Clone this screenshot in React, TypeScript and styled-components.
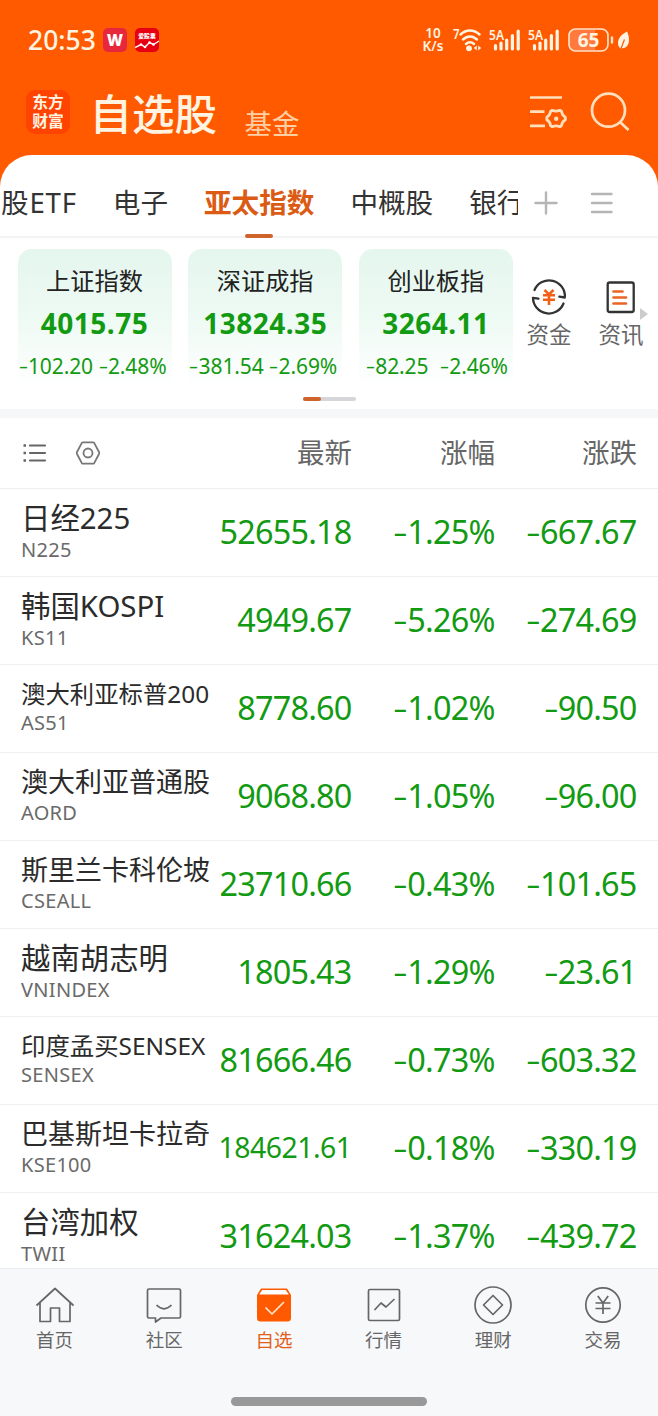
import React from "react";
import styled, { createGlobalStyle } from "styled-components";

const SANS = '"Noto Sans", "Noto Sans CJK SC", sans-serif';
const ORANGE = "#ff5a00";
const CREAM = "#fff4e2";
const GREEN = "#129a12";

const Global = createGlobalStyle`
  * { box-sizing: border-box; }
  html, body { margin: 0; padding: 0; }
  body { font-family: ${SANS}; background: #fff; }
  svg { display: block; flex: none; overflow: visible; }
`;

const Screen = styled.div`
  width: 658px;
  height: 1416px;
  display: flex;
  flex-direction: column;
  overflow: hidden;
  background: ${ORANGE};
`;

/* ---------- status bar ---------- */
const StatusBar = styled.div`
  height: 80px;
  flex: none;
  display: flex;
  align-items: center;
  padding: 0 28px;
  color: ${CREAM};
`;
const Clock = styled.div`
  width: 75px;
  font-size: 26.5px;
  line-height: 38px;
  font-weight: 500;
  white-space: nowrap;
`;
const AppBadge = styled.div`
  width: 24px;
  height: 24px;
  margin-right: 8px;
  border-radius: 5px;
  overflow: hidden;
`;
const StatusIcons = styled.div`
  margin-left: auto;
  display: flex;
  align-items: center;
`;
const Speed = styled.div`
  width: 22px;
  margin-top: -1px;
  font-size: 13.5px;
  line-height: 13px;
  font-weight: 600;
  text-align: center;
  white-space: nowrap;
`;

/* ---------- title bar ---------- */
const TitleBar = styled.div`
  height: 75px;
  flex: none;
  display: flex;
  align-items: flex-start;
  padding: 0 28px 0 26px;
`;
const Logo = styled.div`
  width: 44px;
  height: 44px;
  margin-top: 10px;
  padding: 3px 0 0;
  border-radius: 9px;
  background: #ff4300;
  color: ${CREAM};
  font: 700 15.8px/18.5px "Noto Sans CJK SC", sans-serif;
  text-align: center;
`;
const MainTitle = styled.div`
  margin: 6px 0 0 19.5px;
  width: 155px;
  color: ${CREAM};
  font-size: 42.5px;
  line-height: 56px;
  font-weight: 500;
`;
const SubTitle = styled.div`
  margin-top: 24px;
  color: #ffcfa4;
  font-size: 27.5px;
  line-height: 40px;
`;
const TitleActions = styled.div`
  margin: 12px 0 0 auto;
  display: flex;
  gap: 22px;
`;

/* ---------- sheet ---------- */
const Sheet = styled.div`
  flex: 1;
  min-height: 0;
  display: flex;
  flex-direction: column;
  background: #fff;
  border-radius: 32px 32px 0 0;
  overflow: hidden;
`;
const TabBar = styled.div`
  height: 83px;
  flex: none;
  display: flex;
  border-bottom: 2px solid #f3f3f4;
`;
const TabStrip = styled.div`
  width: 518px;
  height: 83px;
  padding-left: 1px;
  display: flex;
  gap: 36px;
  overflow: hidden;
`;
const Tab = styled.div<{ $active?: boolean; $wide?: boolean }>`
  flex: none;
  display: flex;
  flex-direction: column;
  align-items: center;
  justify-content: space-between;
  padding-top: 27px;
  font-size: 27.6px;
  line-height: 40px;
  letter-spacing: ${(p) => (p.$wide ? "0.8px" : "0")};
  font-weight: ${(p) => (p.$active ? 700 : 400)};
  color: ${(p) => (p.$active ? "#db5b14" : "#333")};
  white-space: nowrap;
`;
const TabMark = styled.div`
  width: 28px;
  height: 4px;
  border-radius: 2px;
  background: #d0622c;
`;
const TabTools = styled.div`
  flex: 1;
  display: flex;
  gap: 32px;
  padding: 36px 0 0 16px;
`;

const Indices = styled.div`
  height: 171px;
  flex: none;
  display: flex;
  flex-direction: column;
`;
const IndexRow = styled.div`
  display: flex;
  padding: 11px 0 0 17.5px;
`;
const Card = styled.div`
  width: 154px;
  height: 138px;
  flex: none;
  margin-right: 16.7px;
  border-radius: 14px;
  background: linear-gradient(#e4f6ed, #eefaf4 50%, #fff);
  text-align: center;
  white-space: nowrap;
`;
const CardName = styled.div`
  padding-top: 14px;
  font-size: 24.2px;
  line-height: 36px;
  color: #222;
`;
const CardPrice = styled.div`
  margin-top: 4px;
  font-size: 28px;
  line-height: 40px;
  font-weight: 700;
  letter-spacing: 0.5px;
  color: ${GREEN};
`;
const CardChange = styled.div`
  display: flex;
  margin-top: 8px;
  padding-left: 0.5px;
  font-size: 21px;
  line-height: 30px;
  letter-spacing: -0.1px;
  color: ${GREEN};
`;
const Half = styled.div`
  width: 77px;
  display: flex;
  justify-content: center;
`;
const Minus = styled.span`
  display: inline-block;
  margin-right: 0.07em;
  transform: scale(1.4, 0.85) translateY(-0.01em);
`;
const Shortcut = styled.div<{ $gap: number }>`
  width: 46px;
  flex: none;
  margin-left: ${(p) => p.$gap}px;
  display: flex;
  flex-direction: column;
  align-items: center;
  padding-top: 30px;
  font-size: 22.5px;
  line-height: 34px;
  color: #666;
`;
const ShortcutLabel = styled.div`
  margin-top: 3px;
  white-space: nowrap;
`;
const More = styled.div`
  width: 8px;
  margin-left: -4px;
  padding-top: 59px;
`;
const Pager = styled.div`
  width: 53px;
  height: 4px;
  margin: 10px 0 0 303px;
  border-radius: 2px;
  background: #d5d5da;
`;
const PagerThumb = styled.div`
  width: 18px;
  height: 4px;
  border-radius: 2px;
  background: #d0622c;
`;
const Divider = styled.div`
  height: 9px;
  flex: none;
  background: #f6f7f9;
`;

/* ---------- quote table ---------- */
const Columns = styled.div`
  display: grid;
  grid-template-columns: 193px 138px 143px 142px;
  padding-left: 21px;
`;
const HeadRow = styled(Columns)`
  height: 71px;
  flex: none;
  align-items: center;
  border-bottom: 1px solid #eee;
`;
const HeadTools = styled.div`
  display: flex;
  align-items: center;
  gap: 29px;
  padding-left: 1px;
`;
const HeadCell = styled.div`
  text-align: right;
  font-size: 27.5px;
  line-height: 40px;
  padding-bottom: 1px;
  color: #666;
`;
const Rows = styled.div`
  flex: 1;
  min-height: 0;
  overflow: hidden;
`;
const QuoteRow = styled(Columns)`
  height: 88px;
  border-bottom: 1px solid #f0f0f0;
`;
const NameCell = styled.div`
  padding-top: 11px;
  white-space: nowrap;
`;
const Name = styled.div<{ $size: number }>`
  height: ${(p) => (p.$size > 28 ? 38 : p.$size > 26 ? 37 : 35)}px;
  font-size: ${(p) => p.$size}px;
  line-height: 36px;
  color: #2b2b2b;
`;
const Code = styled.div`
  font-size: 20px;
  line-height: 24px;
  letter-spacing: 0.3px;
  color: #6a6a6a;
`;
const Num = styled.div<{ $size?: number }>`
  display: flex;
  justify-content: flex-end;
  font-size: ${(p) => p.$size ?? 32.4}px;
  line-height: 84px;
  letter-spacing: ${(p) => (p.$size ? -0.5 : -0.8)}px;
  padding-right: 0.5px;
  color: ${GREEN};
  white-space: nowrap;
`;

/* ---------- bottom navigation ---------- */
const BottomBar = styled.div`
  height: 148px;
  flex: none;
  display: flex;
  flex-direction: column;
  align-items: center;
  background: #f7f8fa;
  border-top: 1px solid #ebebed;
`;
const NavRow = styled.div`
  width: 100%;
  height: 128px;
  display: grid;
  grid-template-columns: repeat(6, 1fr);
`;
const NavItem = styled.div<{ $active?: boolean }>`
  display: flex;
  flex-direction: column;
  align-items: center;
  padding: 17px 0.5px 0 0;
  font-size: 18.5px;
  line-height: 28px;
  color: ${(p) => (p.$active ? "#e2601a" : "#666")};
`;
const HomeIndicator = styled.div`
  width: 196px;
  height: 9px;
  border-radius: 5px;
  background: #999;
`;

/* ---------- icons ---------- */
const WBadge = () => (
  <svg width="24" height="24" viewBox="0 0 24 24">
    <rect width="24" height="24" fill="#e9273c" />
    <text x="12" y="17.500" textAnchor="middle" fontSize="15.500" fontWeight="800" fill="#fff" fontFamily="Inter">W</text>
  </svg>
);
const StockBadge = () => (
  <svg width="24" height="24" viewBox="0 0 24 24">
    <rect width="24" height="24" fill="#e60012" />
    <text x="12" y="10" textAnchor="middle" fontSize="5.8" fontWeight="900" fill="#fff" fontFamily="Noto Sans CJK SC">爱股票</text>
    <path d="M0 19.5l6-3 4 2.5 4.500-4.500 4 2L24 13" fill="none" stroke="#fff" strokeWidth="1.4" />
    <g fill="#fff"><circle cx="6" cy="16.500" r="1.300" /><circle cx="10" cy="19" r="1.300" /><circle cx="14.500" cy="14.500" r="1.300" /><circle cx="18.500" cy="16.500" r="1.300" /></g>
  </svg>
);
const StatusSvg = styled.svg<{ $gap: number }>`
  margin-left: ${(p) => p.$gap}px;
`;
const Wifi = () => (
  <StatusSvg $gap={8} width="30" height="26" viewBox="0 0 30 26">
    <text x="1" y="11.500" fontSize="14" fontWeight="600" fill={CREAM} textLength="6.500" lengthAdjust="spacingAndGlyphs">7</text>
    <g fill="none" stroke={CREAM} strokeWidth="2.500" strokeLinecap="round">
      <path d="M8.500 7.500c5.700-5.400 13.300-5.400 19 0" />
      <path d="M11 12.500c4.200-4 9.800-4 14 0" />
      <path d="M14 17c2.500-2.200 5.500-2.200 8 0" />
    </g>
    <circle cx="17" cy="21.300" r="2.900" fill={CREAM} />
    <path d="M24.800 18.500v5l-3-2.500zM26.200 18.500v5l3-2.500z" fill={CREAM} />
  </StatusSvg>
);
const Signal = () => (
  <StatusSvg $gap={7} width="32" height="26" viewBox="0 0 32 26">
    <text x="0" y="12.500" fontSize="14" fontWeight="600" fill={CREAM} textLength="15" lengthAdjust="spacingAndGlyphs">5A</text>
    <path d="M6.500 18.500v3.500M12 16v6M17.700 13v9M23.400 8.500V22M29.200 4v18" stroke={CREAM} strokeWidth="3.200" strokeLinecap="round" />
  </StatusSvg>
);
const Battery = () => (
  <StatusSvg $gap={8} width="62" height="26" viewBox="0 0 62 26">
    <rect x="1" y="2" width="39" height="22" rx="6.500" fill="#ff7a3c" stroke="#ffe0c4" strokeWidth="1.700" />
    <path d="M27 3h6.500a5.500 5.500 0 0 1 5.500 5.500v9a5.500 5.500 0 0 1-5.500 5.500H27z" fill={ORANGE} />
    <text x="20.500" y="19.800" textAnchor="middle" fontSize="19" fontWeight="700" fill={CREAM}>65</text>
    <path d="M44 10.500v5" stroke="#ffe0c4" strokeWidth="2.400" strokeLinecap="round" />
    <path d="M59 4.500C53 7.500 50 11.500 50 16c0 2.300.8 4 2.300 5.500 5.700 0 8.700-3.500 8.700-8.500 0-3.300-.8-5.700-2-8.500z" fill={CREAM} />
    <path d="M52.800 22l3.700-9.500" stroke={ORANGE} strokeWidth="1.200" />
  </StatusSvg>
);
const ListSettings = () => (
  <svg width="39" height="40" viewBox="0 0 39 40">
    <g fill="none" stroke="#ffdfbc" strokeWidth="2.700">
      <path d="M1 5.500h32M1 19.700h14.500M1 33.800h15" />
      <path strokeLinejoin="round" d="M23.300 18.300q3.700 1.800 7.600 0l1.600.9q.4 4.100 3.900 6v2.600q-3.500 1.900-3.900 6l-1.600.9q-3.900-1.800-7.600 0l-1.700-.9q-.4-4.100-3.800-6v-2.600q3.400-1.900 3.800-6z" />
    </g>
    <circle cx="27.200" cy="26.700" r="2.200" fill="#ffdfbc" />
  </svg>
);
const Search = () => (
  <svg width="40" height="40" viewBox="0 0 40 40">
    <g fill="none" stroke="#ffdfbc" strokeWidth="2.700">
      <circle cx="18.500" cy="18.200" r="16.500" />
      <path d="M30 30l8.500 8" />
    </g>
  </svg>
);
const Plus = () => (
  <svg width="24" height="24" viewBox="0 0 24 24">
    <path d="M12 1.500v21M1.500 12h21" stroke="#b5b5b5" strokeWidth="2.400" strokeLinecap="round" />
  </svg>
);
const Burger = () => (
  <svg width="24" height="24" viewBox="0 0 24 24">
    <path d="M2 3h19.500M2 12h19.500M2 21h19.500" stroke="#b5b5b5" strokeWidth="2.400" strokeLinecap="round" />
  </svg>
);
const Funds = () => (
  <svg width="36" height="36" viewBox="0 0 36 36">
    <g fill="none" stroke="#333" strokeWidth="2.300" strokeLinejoin="round" strokeLinecap="round">
      <path d="M3.500 11A15.800 15.800 0 0 1 33.800 18.500l-5.500-.8" />
      <path d="M32.500 24.500A15.800 15.800 0 0 1 2 18.800l5.500.8" />
    </g>
    <path d="M13.500 11l4.500 4.500 4.500-4.500M12 16.300h12M12 20.800h12M18 15.500v10.500" fill="none" stroke="#f26016" strokeWidth="2.600" />
  </svg>
);
const News = () => (
  <svg width="36" height="36" viewBox="0 0 36 36">
    <rect x="4.700" y="3.500" width="26" height="29.500" rx="2" fill="none" stroke="#333" strokeWidth="2.300" />
    <path d="M10.500 12.500h9M10.500 18.500h12.500M10.500 24.500h12.500" stroke="#ea6624" strokeWidth="2.700" strokeLinecap="round" />
  </svg>
);
const Bullets = () => (
  <svg width="24" height="22" viewBox="0 0 24 22">
    <path d="M8 3.500h15M8 11h15M8 18.500h15" stroke="#666" strokeWidth="2.200" strokeLinecap="round" />
    <path d="M1.500 3.500h2.500M1.500 11h2.500M1.500 18.500h2.500" stroke="#666" strokeWidth="2.500" />
  </svg>
);
const HexNut = () => (
  <svg width="26" height="26" viewBox="0 0 26 26">
    <g fill="none" stroke="#777" strokeWidth="1.800" strokeLinejoin="round">
      <path d="M8.200 2.300h9.600q1 0 1.500.8l4.700 8.900q.5 1 0 2l-4.700 8.900q-.5.800-1.500.800H8.200q-1 0-1.500-.8L2 14q-.5-1 0-2l4.700-8.900q.5-.8 1.500-.8z" />
      <circle cx="13" cy="13" r="4.500" />
    </g>
  </svg>
);

const navIcons: Record<string, React.ReactElement> = {
  首页: (
    <path d="M1.500 19.500L20 2.500l18.500 17M5 16.500V35.500h10.500V22h9v13.500H35V16.500" />
  ),
  社区: (
    <>
      <path d="M5 3h30q1.500 0 1.500 1.500v26q0 1.500-1.500 1.500H17l-5.500 4V32H5q-1.500 0-1.500-1.500V4.500Q3.500 3 5 3z" />
      <path d="M12.500 19q7.500 7.500 15 0" />
    </>
  ),
  自选: (
    <>
      <path d="M7 2.500h26l4 6.500v23q0 3.500-3.500 3.500h-27Q3 35.500 3 32V9z" fill={ORANGE} stroke="none" />
      <path d="M8.200 4h23.600l3 4.500H5.200z" fill="#fff" stroke="none" />
      <path d="M11.500 21.500l6.500 6.500L30 16" stroke="#ffe6cf" />
    </>
  ),
  行情: (
    <>
      <rect x="4.500" y="3.500" width="31" height="31" rx="1.500" />
      <path d="M10.500 24l6.500-7 5 4 8.500-8" />
    </>
  ),
  理财: (
    <>
      <circle cx="20" cy="19" r="18" />
      <path d="M20 9.500L29.500 19 20 28.500 10.500 19z" />
    </>
  ),
  交易: (
    <>
      <circle cx="20" cy="19" r="17.200" />
      <path d="M14.800 10l5.200 7L25.200 10M12.500 17h15M12.500 22.500h15M20 17v11" />
    </>
  ),
};

const cards = [
  ["上证指数", "4015.75", "-102.20", "-2.48%"],
  ["深证成指", "13824.35", "-381.54", "-2.69%"],
  ["创业板指", "3264.11", "-82.25", "-2.46%"],
];

type Quote = { name: string; size: number; code: string; last: string; pct: string; diff: string; lastSize?: number };
const quotes: Quote[] = [
  { name: "日经225", size: 29.4, code: "N225", last: "52655.18", pct: "-1.25%", diff: "-667.67" },
  { name: "韩国KOSPI", size: 29.4, code: "KS11", last: "4949.67", pct: "-5.26%", diff: "-274.69" },
  { name: "澳大利亚标普200", size: 24.4, code: "AS51", last: "8778.60", pct: "-1.02%", diff: "-90.50" },
  { name: "澳大利亚普通股", size: 27, code: "AORD", last: "9068.80", pct: "-1.05%", diff: "-96.00" },
  { name: "斯里兰卡科伦坡", size: 27, code: "CSEALL", last: "23710.66", pct: "-0.43%", diff: "-101.65" },
  { name: "越南胡志明", size: 29.4, code: "VNINDEX", last: "1805.43", pct: "-1.29%", diff: "-23.61" },
  { name: "印度孟买SENSEX", size: 24.4, code: "SENSEX", last: "81666.46", pct: "-0.73%", diff: "-603.32" },
  { name: "巴基斯坦卡拉奇", size: 27, code: "KSE100", last: "184621.61", pct: "-0.18%", diff: "-330.19", lastSize: 28.4 },
  { name: "台湾加权", size: 29.4, code: "TWII", last: "31624.03", pct: "-1.37%", diff: "-439.72" },
];

const Signed = ({ value }: { value: string }) => (
  <span>
    <Minus>-</Minus>
    {value.slice(1)}
  </span>
);

export default function App() {
  return (
    <>
      <Global />
      <Screen>
        <StatusBar>
          <Clock>20:53</Clock>
          <AppBadge><WBadge /></AppBadge>
          <AppBadge><StockBadge /></AppBadge>
          <StatusIcons>
            <Speed>10<br />K/s</Speed>
            <Wifi />
            <Signal />
            <Signal />
            <Battery />
          </StatusIcons>
        </StatusBar>
        <TitleBar>
          <Logo>东方<br />财富</Logo>
          <MainTitle>自选股</MainTitle>
          <SubTitle>基金</SubTitle>
          <TitleActions>
            <ListSettings />
            <Search />
          </TitleActions>
        </TitleBar>
        <Sheet>
          <TabBar>
            <TabStrip>
              <Tab $wide>股ETF</Tab>
              <Tab>电子</Tab>
              <Tab $active>亚太指数<TabMark /></Tab>
              <Tab>中概股</Tab>
              <Tab>银行</Tab>
            </TabStrip>
            <TabTools>
              <Plus />
              <Burger />
            </TabTools>
          </TabBar>
          <Indices>
            <IndexRow>
              {cards.map(([name, price, diff, pct]) => (
                <Card key={name}>
                  <CardName>{name}</CardName>
                  <CardPrice>{price}</CardPrice>
                  <CardChange>
                    <Half><Signed value={diff} /></Half>
                    <Half><Signed value={pct} /></Half>
                  </CardChange>
                </Card>
              ))}
              <Shortcut $gap={-3.5}><Funds /><ShortcutLabel>资金</ShortcutLabel></Shortcut>
              <Shortcut $gap={26}><News /><ShortcutLabel>资讯</ShortcutLabel></Shortcut>
              <More>
                <svg width="8" height="12" viewBox="0 0 8 12"><path d="M0 0l8 6-8 6z" fill="#ccc" /></svg>
              </More>
            </IndexRow>
            <Pager><PagerThumb /></Pager>
          </Indices>
          <Divider />
          <HeadRow>
            <HeadTools><Bullets /><HexNut /></HeadTools>
            <HeadCell>最新</HeadCell>
            <HeadCell>涨幅</HeadCell>
            <HeadCell>涨跌</HeadCell>
          </HeadRow>
          <Rows>
            {quotes.map((q) => (
              <QuoteRow key={q.code}>
                <NameCell>
                  <Name $size={q.size}>{q.name}</Name>
                  <Code>{q.code}</Code>
                </NameCell>
                <Num $size={q.lastSize}>{q.last}</Num>
                <Num><Signed value={q.pct} /></Num>
                <Num><Signed value={q.diff} /></Num>
              </QuoteRow>
            ))}
          </Rows>
        </Sheet>
        <BottomBar>
          <NavRow>
            {Object.entries(navIcons).map(([label, icon]) => (
              <NavItem key={label} $active={label === "自选"}>
                <svg width="40" height="40" viewBox="0 0 40 40" fill="none" stroke="#666" strokeWidth="1.700" strokeLinejoin="round">
                  {icon}
                </svg>
                <span>{label}</span>
              </NavItem>
            ))}
          </NavRow>
          <HomeIndicator />
        </BottomBar>
      </Screen>
    </>
  );
}
